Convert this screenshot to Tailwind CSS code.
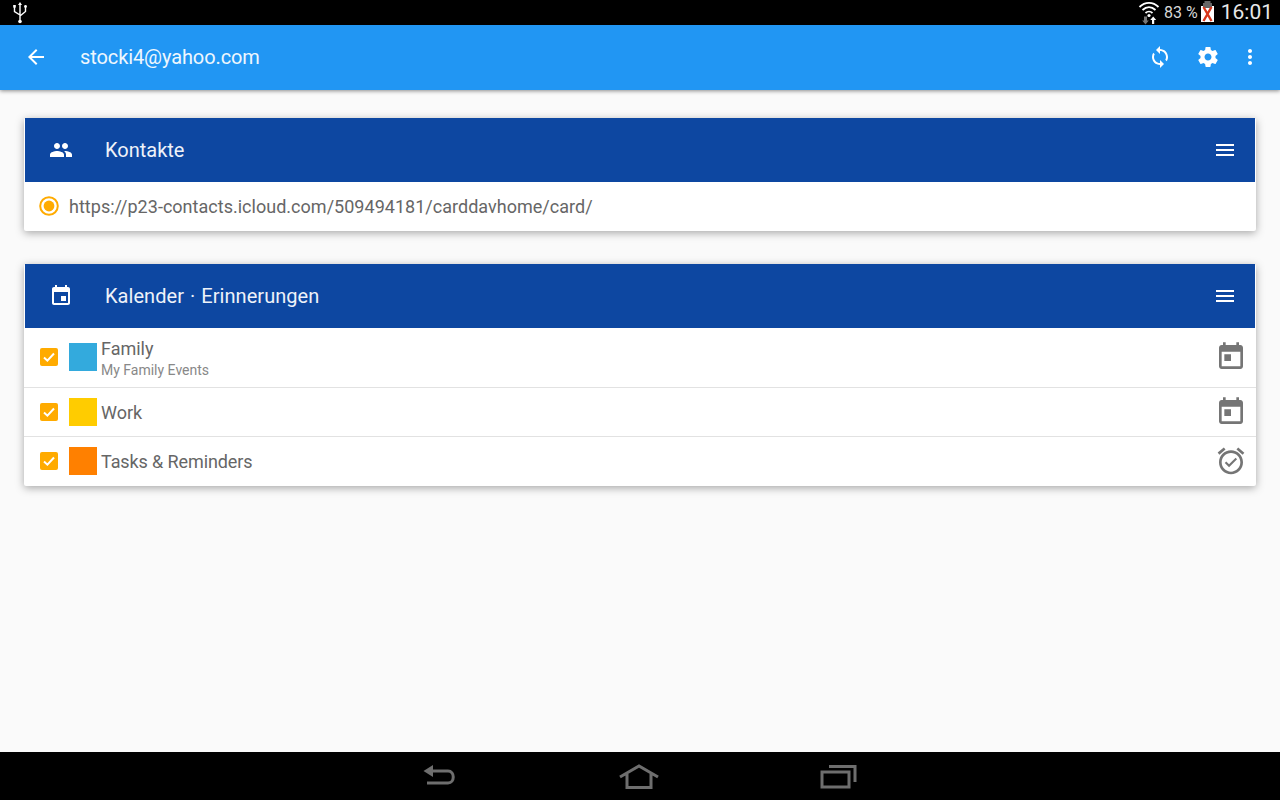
<!DOCTYPE html>
<html lang="en">
<head>
  <meta charset="UTF-8" />
  <title>Account</title>
  <script src="https://cdn.jsdelivr.net/npm/@tailwindcss/browser@4"></script>
</head>
<body class="w-[1280px] h-[800px] overflow-hidden flex flex-col bg-[#fafafa] font-['Roboto',sans-serif]">

  <!-- status bar -->
  <div class="h-[25px] shrink-0 bg-black flex items-center text-[#e4e4e4]">
    <svg class="ml-[12px] w-[16px] h-[25px]" viewBox="0 0 16 25" fill="none" stroke="#fff" stroke-width="1.4">
      <path d="M8 4v17M2.5 7v4.5L8 15M13.5 7v4.5L8 16"/>
      <path d="M8 2l2 3H6z" fill="#fff" stroke="none"/>
      <rect x="1.2" y="5" width="2.6" height="2.6" fill="#fff" stroke="none"/>
      <circle cx="13.5" cy="6.5" r="1.4" fill="#fff" stroke="none"/>
      <circle cx="8" cy="21.5" r="1.8" fill="#fff" stroke="none"/>
    </svg>
    <div class="ml-auto flex items-center">
      <svg class="w-[22px] h-[25px]" viewBox="0 0 22 25" fill="none">
        <path d="M1.5 7C7 1.5 15 1.5 20.5 7M4.5 10C8.500 6.300 13.500 6.300 17.500 10M7.500 13c2-1.800 5-1.800 7 0" stroke="#fff" stroke-width="1.800"/>
        <circle cx="11" cy="15.500" r="1.600" fill="#fff"/>
        <path d="M6 16.500h3v4h1.800L7.500 24.500 4.200 20.500H6z" fill="#777"/>
        <path d="M14 24v-4h-1.800l3-3.500 3 3.500H16.200v4z" fill="#fff"/>
      </svg>
      <span class="ml-[4px] text-[16px] leading-[25px] text-[#d8d8d8]">83 %</span>
      <svg class="ml-[2px] w-[15px] h-[25px]" viewBox="0 0 15 25">
        <rect x="4.500" y="1" width="6" height="3" fill="#666"/>
        <rect x="1" y="6" width="13" height="16" fill="#fff"/>
        <rect x="3" y="3" width="9" height="5" fill="#666"/>
        <path d="M3.500 7l8 14M11.500 7l-8 14" stroke="#d8371c" stroke-width="2.400"/>
      </svg>
      <span class="ml-[6px] mr-[7px] text-[21px] leading-[25px] text-[#e8e8e8]">16:01</span>
    </div>
  </div>

  <!-- toolbar -->
  <div class="h-[65px] shrink-0 pb-[1px] bg-[#2196f3] flex items-center text-white shadow-[0_1px_4px_rgba(0,0,0,0.45)] z-10">
    <svg class="ml-[24px] w-[24px] h-[24px]" viewBox="0 0 24 24" fill="currentColor"><path d="M20 11H7.830l5.590-5.590L12 4l-8 8 8 8 1.410-1.410L7.830 13H20v-2z"/></svg>
    <span class="ml-[32px] text-[20px] leading-[24px] tracking-[-0.1px] text-[#eef7fe]">stocki4@yahoo.com</span>
    <div class="ml-auto mr-[18px] flex items-center gap-[24px]">
      <svg class="w-[24px] h-[24px]" viewBox="0 0 24 24" fill="currentColor"><path d="M12 4V1L8 5l4 4V6c3.310 0 6 2.690 6 6 0 1.010-.25 1.970-.7 2.800l1.460 1.460C19.540 15.030 20 13.570 20 12c0-4.420-3.580-8-8-8zm0 14c-3.310 0-6-2.690-6-6 0-1.010.25-1.970.7-2.800L5.240 7.740C4.460 8.970 4 10.430 4 12c0 4.420 3.580 8 8 8v3l4-4-4-4v3z"/></svg>
      <svg class="w-[24px] h-[24px]" viewBox="0 0 24 24" fill="currentColor"><path d="M19.430 12.980c.04-.32.07-.64.07-.98s-.03-.66-.07-.98l2.110-1.650c.19-.15.24-.42.12-.64l-2-3.460c-.12-.22-.39-.3-.61-.22l-2.490 1c-.52-.4-1.080-.73-1.690-.98l-.38-2.650C14.460 2.180 14.250 2 14 2h-4c-.25 0-.46.18-.49.42l-.38 2.650c-.61.25-1.170.59-1.690.98l-2.490-1c-.23-.09-.49 0-.61.22l-2 3.460c-.13.22-.07.49.12.64l2.110 1.650c-.04.32-.07.65-.07.98s.03.66.07.98l-2.110 1.650c-.19.15-.24.42-.12.64l2 3.460c.12.22.39.3.61.22l2.490-1c.52.4 1.080.73 1.690.98l.38 2.650c.03.24.24.42.49.42h4c.25 0 .46-.18.49-.42l.38-2.650c.61-.25 1.170-.59 1.690-.98l2.490 1c.23.09.49 0 .61-.22l2-3.460c.12-.22.07-.49-.12-.64l-2.110-1.650zM12 15.500c-1.930 0-3.500-1.570-3.500-3.500s1.570-3.500 3.500-3.500 3.500 1.570 3.500 3.500-1.570 3.500-3.500 3.500z"/></svg>
      <svg class="-ml-[6px] w-[24px] h-[24px]" viewBox="0 0 24 24" fill="currentColor"><path d="M12 8c1.100 0 2-.9 2-2s-.9-2-2-2-2 .9-2 2 .9 2 2 2zm0 2c-1.100 0-2 .9-2 2s.9 2 2 2 2-.9 2-2-.9-2-2-2zm0 6c-1.100 0-2 .9-2 2s.9 2 2 2 2-.9 2-2-.9-2-2-2z"/></svg>
    </div>
  </div>

  <!-- content -->
  <div class="flex-1 px-[24px] pt-[28px]">

    <div class="bg-white shadow-[0_2px_9px_rgba(0,0,0,0.34)] rounded-[2px] mb-[33px]">
      <div class="mx-[1px] h-[64px] bg-[#0d47a1] flex items-center text-white">
        <svg class="ml-[24px] w-[24px] h-[24px]" viewBox="0 0 24 24" fill="currentColor"><path d="M16 11c1.660 0 2.990-1.340 2.990-3S17.660 5 16 5c-1.660 0-3 1.340-3 3s1.340 3 3 3zm-8 0c1.660 0 2.990-1.340 2.990-3S9.660 5 8 5C6.340 5 5 6.340 5 8s1.340 3 3 3zm0 2c-2.330 0-7 1.170-7 3.500V19h14v-2.500c0-2.330-4.670-3.500-7-3.500zm8 0c-.29 0-.62.02-.97.05 1.160.84 1.970 1.970 1.970 3.450V19h6v-2.500c0-2.330-4.670-3.500-7-3.500z"/></svg>
        <span class="ml-[32px] text-[20px] leading-[24px] text-[#eef2f9]">Kontakte</span>
        <svg class="ml-auto mr-[18px] w-[24px] h-[24px]" viewBox="0 0 24 24" fill="currentColor"><path d="M3 18h18v-2H3v2zm0-5h18v-2H3v2zm0-7v2h18V6H3z"/></svg>
      </div>
      <div class="h-[49px] flex items-center">
        <svg class="ml-[14px] -mt-[1px] w-[22px] h-[22px]" viewBox="0 0 22 22" fill="none"><circle cx="11" cy="11" r="8.800" stroke="#ffab00" stroke-width="2"/><circle cx="11" cy="11" r="5.400" fill="#ffab00"/></svg>
        <span class="ml-[9px] text-[18px] leading-[24px] tracking-[0.02px] text-[#666666]">https://p23-contacts.icloud.com/509494181/carddavhome/card/</span>
      </div>
    </div>

    <div class="bg-white shadow-[0_2px_9px_rgba(0,0,0,0.34)] rounded-[2px]">
      <div class="mx-[1px] h-[64px] bg-[#0d47a1] flex items-center text-white">
        <svg class="ml-[24px] w-[24px] h-[24px]" viewBox="0 0 24 24" fill="currentColor"><path d="M17 12h-5v5h5v-5zM16 1v2H8V1H6v2H5c-1.110 0-1.990.9-1.990 2L3 19c0 1.100.89 2 2 2h14c1.100 0 2-.9 2-2V5c0-1.100-.9-2-2-2h-1V1h-2zm3 18H5V8h14v11z"/></svg>
        <span class="ml-[32px] text-[20px] leading-[24px] [word-spacing:1px] tracking-[0.05px] text-[#eef2f9]">Kalender · Erinnerungen</span>
        <svg class="ml-auto mr-[18px] w-[24px] h-[24px]" viewBox="0 0 24 24" fill="currentColor"><path d="M3 18h18v-2H3v2zm0-5h18v-2H3v2zm0-7v2h18V6H3z"/></svg>
      </div>

      <div class="h-[60px] pb-[1px] flex items-center border-b border-[#e2e2e2]">
        <div class="ml-[16px] w-[18px] h-[18px] rounded-[2px] bg-[#ffab00] flex items-center justify-center">
          <svg class="w-[14px] h-[14px]" viewBox="0 0 14 14" fill="none" stroke="#fff" stroke-width="2"><path d="M2 7.500l3.400 3.200L12 3.500"/></svg>
        </div>
        <div class="ml-[11px] w-[28px] h-[28px] bg-[#33aadd]"></div>
        <div class="ml-[4px] mt-[2px]">
          <div class="text-[18px] leading-[22px] text-[#666666]">Family</div>
          <div class="mt-[1px] text-[14px] leading-[18px] text-[#888888]">My Family Events</div>
        </div>
        <svg class="ml-auto mr-[9px] w-[32px] h-[32px]" viewBox="0 0 24 24" fill="#757575"><path d="M19 3h-1V1h-2v2H8V1H6v2H5c-1.110 0-1.990.9-1.990 2L3 19c0 1.100.89 2 2 2h14c1.100 0 2-.9 2-2V5c0-1.100-.9-2-2-2zm0 16H5V8h14v11zM7 10h5v5H7z"/></svg>
      </div>

      <div class="h-[49px] flex items-center border-b border-[#e2e2e2]">
        <div class="ml-[16px] w-[18px] h-[18px] rounded-[2px] bg-[#ffab00] flex items-center justify-center">
          <svg class="w-[14px] h-[14px]" viewBox="0 0 14 14" fill="none" stroke="#fff" stroke-width="2"><path d="M2 7.500l3.400 3.200L12 3.500"/></svg>
        </div>
        <div class="ml-[11px] w-[28px] h-[28px] bg-[#ffcc00]"></div>
        <div class="ml-[4px] mt-[1px] text-[18px] leading-[24px] text-[#666666]">Work</div>
        <svg class="ml-auto mr-[9px] w-[32px] h-[32px]" viewBox="0 0 24 24" fill="#757575"><path d="M19 3h-1V1h-2v2H8V1H6v2H5c-1.110 0-1.990.9-1.990 2L3 19c0 1.100.89 2 2 2h14c1.100 0 2-.9 2-2V5c0-1.100-.9-2-2-2zm0 16H5V8h14v11zM7 10h5v5H7z"/></svg>
      </div>

      <div class="h-[49px] pb-[1px] flex items-center">
        <div class="ml-[16px] w-[18px] h-[18px] rounded-[2px] bg-[#ffab00] flex items-center justify-center">
          <svg class="w-[14px] h-[14px]" viewBox="0 0 14 14" fill="none" stroke="#fff" stroke-width="2"><path d="M2 7.500l3.400 3.200L12 3.500"/></svg>
        </div>
        <div class="ml-[11px] w-[28px] h-[28px] bg-[#ff8000]"></div>
        <div class="ml-[4px] mt-[1px] text-[18px] leading-[24px] tracking-[-0.1px] text-[#666666]">Tasks &amp; Reminders</div>
        <svg class="ml-auto mr-[9px] w-[32px] h-[32px]" viewBox="0 0 24 24" fill="#757575"><path d="M22 5.720l-4.600-3.860-1.290 1.530 4.600 3.860L22 5.720zM7.880 3.390L6.600 1.860 2 5.710l1.290 1.530 4.590-3.850zM12 4c-4.970 0-9 4.030-9 9s4.020 9 9 9c4.970 0 9-4.030 9-9s-4.030-9-9-9zm0 16c-3.870 0-7-3.130-7-7s3.130-7 7-7 7 3.130 7 7-3.130 7-7 7zm-1.460-5.470L8.410 12.400l-1.060 1.060 3.180 3.180 6-6-1.060-1.060-4.930 4.950z"/></svg>
      </div>
    </div>
  </div>

  <!-- nav bar -->
  <div class="h-[48px] shrink-0 bg-black flex items-center">
    <svg class="ml-[422px] w-[34px] h-[26px]" viewBox="0 0 34 26" fill="none" stroke="#6e6e6e" stroke-width="3">
      <path d="M1.500 8L11 2v12z" fill="#6e6e6e" stroke="none"/>
      <path d="M10 8h16c7 0 7 12 0 12H5"/>
    </svg>
    <svg class="ml-[162px] w-[42px] h-[26px]" viewBox="0 0 42 26" fill="none" stroke="#6e6e6e" stroke-width="3">
      <path d="M2 14L21 3l19 11M9 11v13.500h24V11"/>
    </svg>
    <svg class="ml-[160px] w-[37px] h-[26px]" viewBox="0 0 37 26" fill="none" stroke="#6e6e6e" stroke-width="3">
      <rect x="2" y="9" width="27" height="15"/>
      <path d="M9 3.500h26V19"/>
    </svg>
  </div>

</body>
</html>
